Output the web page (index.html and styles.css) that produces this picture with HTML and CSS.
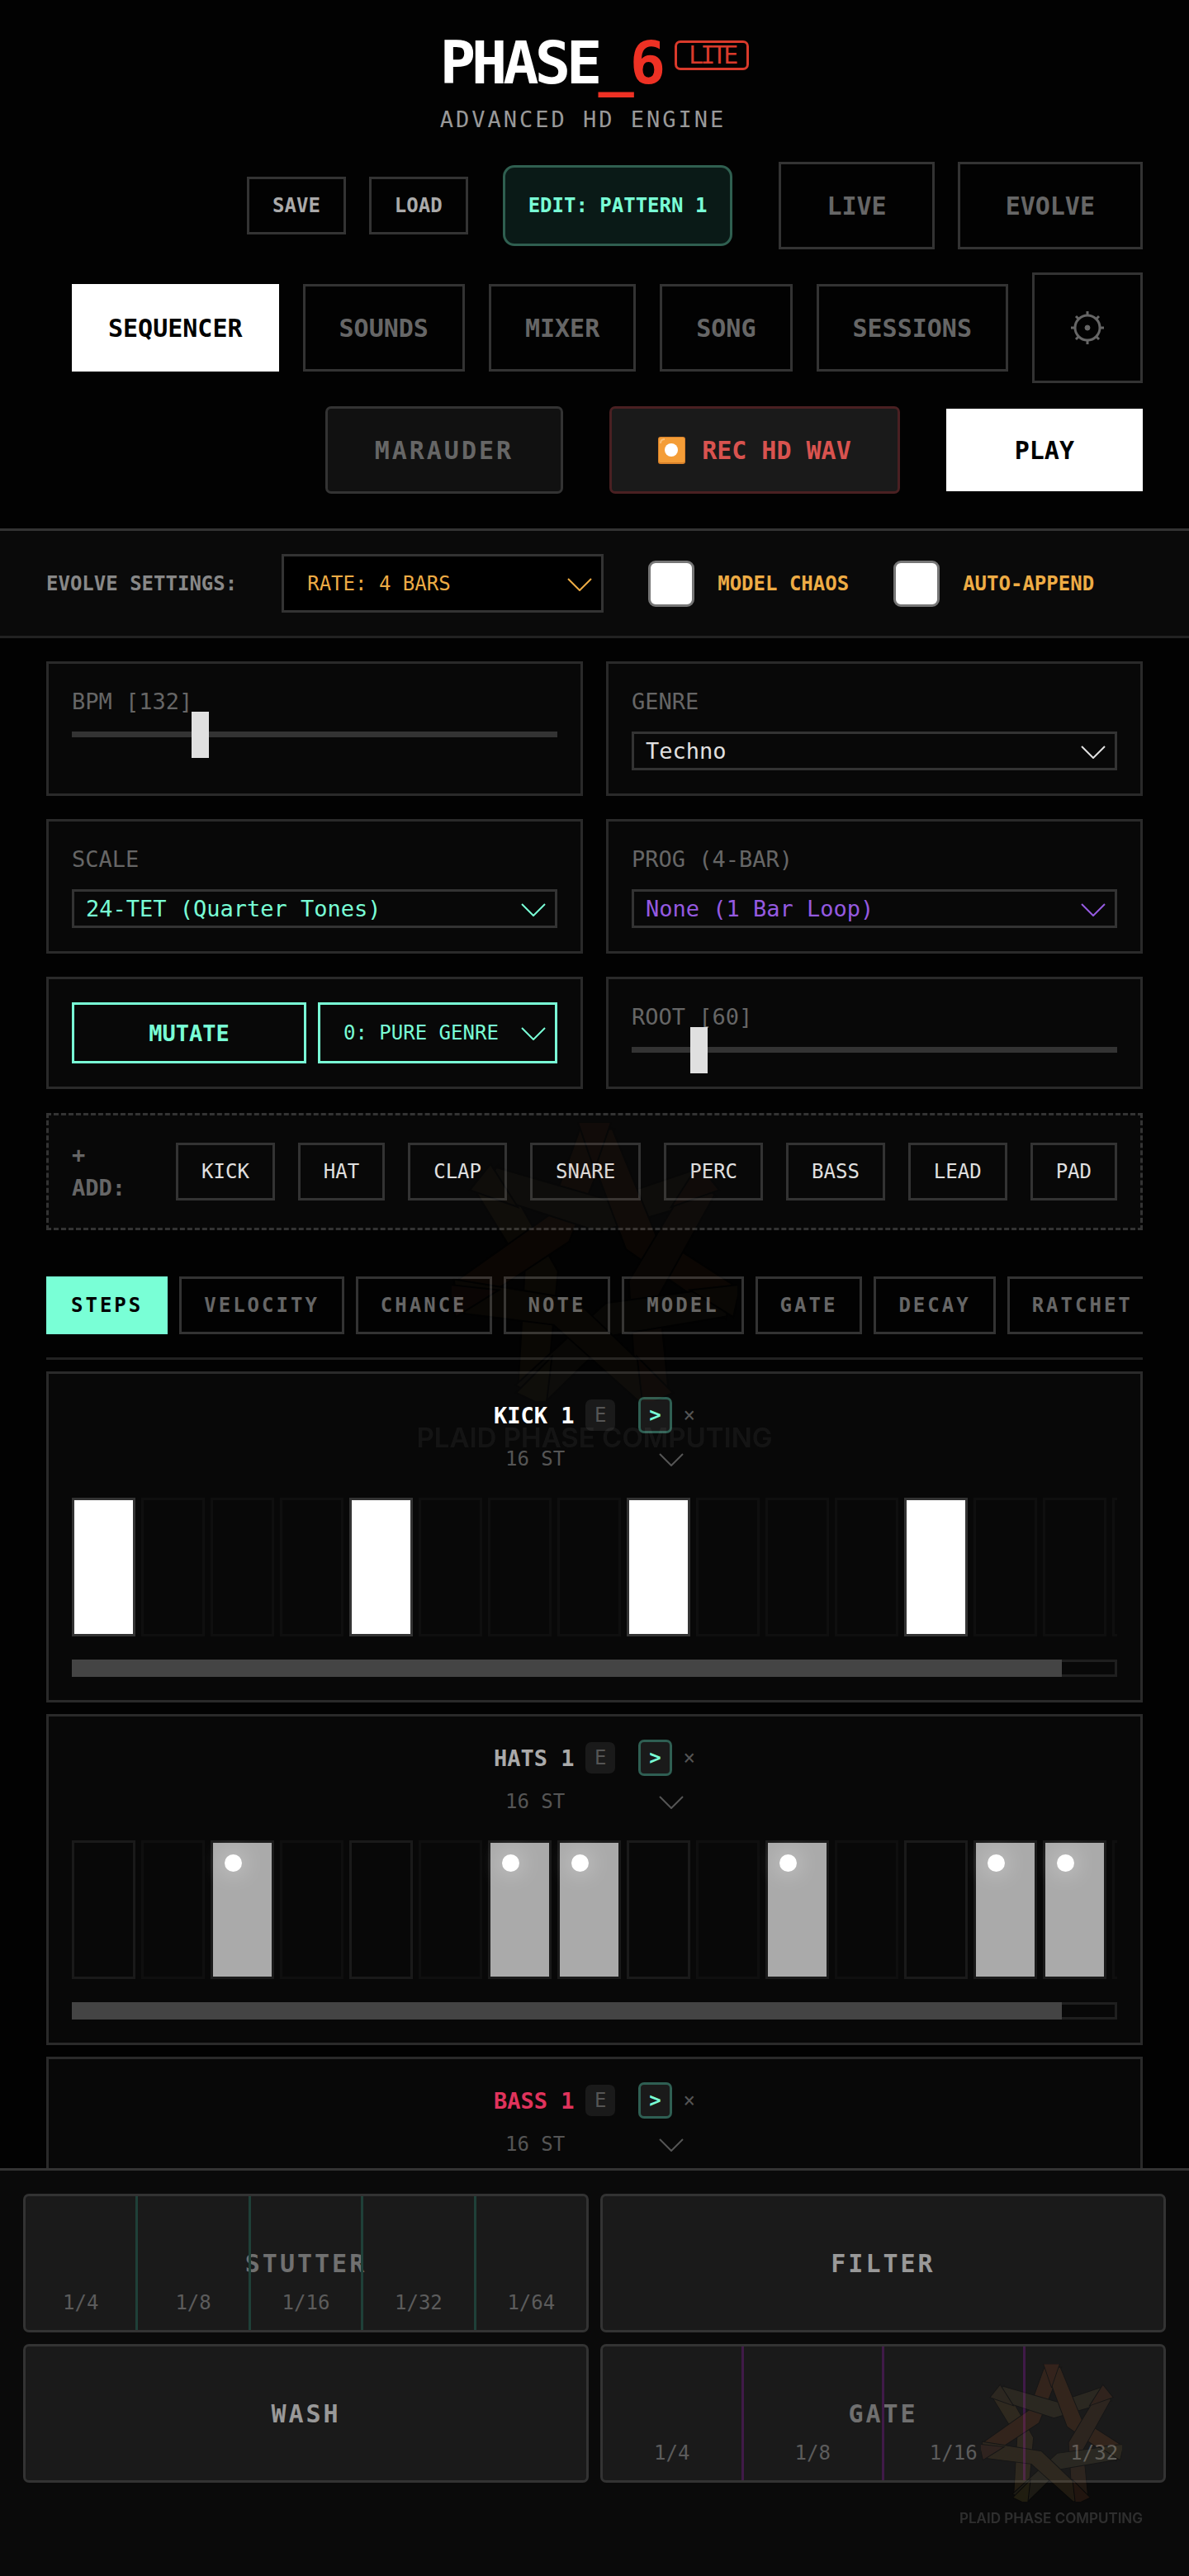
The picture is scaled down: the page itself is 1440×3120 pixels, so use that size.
FILE: index.html
```html
<!DOCTYPE html>
<html lang="en">
<head>
    <meta charset="UTF-8">
    <meta name="viewport" content="width=device-width, initial-scale=1.0">
    <title>PHASE_6 LITE</title>
    <link rel="stylesheet" href="styles.css">
</head>
<body>
    <!-- shared shapes -->
    <svg class="defs" width="0" height="0" aria-hidden="true">
        <symbol id="chevron" viewBox="0 0 30 16">
            <path d="M1 1 L15 15 L29 1" fill="none" stroke="currentColor" stroke-width="2"/>
        </symbol>
        <path id="ribbon" d="M14 41 L28 26 L64 90 L57 167 L40 159 L44 90 Z"/>
        <path id="fold" d="M76 0 L96 0 L86 29 Z"/>
        <symbol id="star" viewBox="0 0 172 168">
            <g stroke="#000" stroke-width="1">
                <use href="#ribbon" fill="#a8803c"/>
                <use href="#ribbon" fill="#c0622c" transform="rotate(51.43 86 88)"/>
                <use href="#ribbon" fill="#8a7a4a" transform="rotate(102.86 86 88)"/>
                <use href="#ribbon" fill="#c0682c" transform="rotate(154.29 86 88)"/>
                <use href="#ribbon" fill="#9c6440" transform="rotate(205.71 86 88)"/>
                <use href="#ribbon" fill="#867c50" transform="rotate(257.14 86 88)"/>
                <use href="#ribbon" fill="#a07a3c" transform="rotate(308.57 86 88)"/>
                <use href="#fold" fill="#c8582a"/>
                <use href="#fold" fill="#b05a34" transform="rotate(51.43 86 88)"/>
                <use href="#fold" fill="#947a3c" transform="rotate(102.86 86 88)"/>
                <use href="#fold" fill="#a85830" transform="rotate(154.29 86 88)"/>
                <use href="#fold" fill="#a08a38" transform="rotate(205.71 86 88)"/>
                <use href="#fold" fill="#a85a3c" transform="rotate(257.14 86 88)"/>
                <use href="#fold" fill="#947044" transform="rotate(308.57 86 88)"/>
            </g>
        </symbol>
    </svg>

    <header class="header">
        <div class="brand">
            <h1 class="logo">PHASE<span class="red">_6</span><span class="lite">LITE</span></h1>
            <p class="tagline">ADVANCED HD ENGINE</p>
        </div>
        <div class="row">
            <div class="group files">
                <button type="button" class="btn small">SAVE</button>
                <button type="button" class="btn small">LOAD</button>
            </div>
            <button type="button" class="btn pattern">EDIT: PATTERN 1</button>
            <div class="group modes">
                <button type="button" class="btn wide">LIVE</button>
                <button type="button" class="btn wide">EVOLVE</button>
            </div>
        </div>
        <nav class="row nav">
            <button type="button" class="btn active">SEQUENCER</button>
            <button type="button" class="btn">SOUNDS</button>
            <button type="button" class="btn">MIXER</button>
            <button type="button" class="btn">SONG</button>
            <button type="button" class="btn">SESSIONS</button>
            <button type="button" class="btn gear" aria-label="Settings">
                <svg width="40" height="40" viewBox="0 0 40 40" fill="none" stroke="currentColor" stroke-width="3">
                    <circle cx="20" cy="20" r="15"/>
                    <circle cx="20" cy="20" r="3" fill="currentColor" stroke-width="1"/>
                    <path d="M20 0V5M20 35V40M0 20H5M35 20H40M6 6L10 10M30 30L34 34M34 6L30 10M10 30L6 34"/>
                </svg>
            </button>
        </nav>
        <div class="row transport">
            <button type="button" class="btn marauder">MARAUDER</button>
            <button type="button" class="btn rec">
                <svg width="33" height="33" viewBox="0 0 33 33" aria-hidden="true">
                    <rect width="33" height="33" rx="3" fill="#d9822b"/>
                    <rect x="1" y="1" width="31" height="30" rx="2" fill="#f49d37"/>
                    <path d="M3 8Q3 3 8 3" fill="none" stroke="#fbc078" stroke-width="2"/>
                    <circle cx="16" cy="16" r="8" fill="#fff"/>
                </svg>
                REC HD WAV
            </button>
            <button type="button" class="btn play">PLAY</button>
        </div>
    </header>

    <section class="evolve">
        <span class="evolve-title">EVOLVE SETTINGS:</span>
        <div class="select rate">
            <select aria-label="Evolve rate"><option>RATE: 4 BARS</option></select>
            <svg class="chev"><use href="#chevron"/></svg>
        </div>
        <label class="check"><input type="checkbox"> MODEL CHAOS</label>
        <label class="check"><input type="checkbox"> AUTO-APPEND</label>
    </section>

    <main class="main">
        <div class="controls">
            <div class="panel">
                <label for="bpm">BPM [132]</label>
                <input type="range" id="bpm" min="40" max="400" value="132">
            </div>
            <div class="panel">
                <label for="genre">GENRE</label>
                <div class="select">
                    <select id="genre"><option>Techno</option></select>
                    <svg class="chev"><use href="#chevron"/></svg>
                </div>
            </div>
            <div class="panel">
                <label for="scale">SCALE</label>
                <div class="select mint">
                    <select id="scale"><option>24-TET (Quarter Tones)</option></select>
                    <svg class="chev"><use href="#chevron"/></svg>
                </div>
            </div>
            <div class="panel">
                <label for="prog">PROG (4-BAR)</label>
                <div class="select purple">
                    <select id="prog"><option>None (1 Bar Loop)</option></select>
                    <svg class="chev"><use href="#chevron"/></svg>
                </div>
            </div>
            <div class="panel mutate">
                <button type="button" class="mutate-btn">MUTATE</button>
                <div class="select mint mutate-select">
                    <select aria-label="Mutation mode"><option>0: PURE GENRE</option></select>
                    <svg class="chev"><use href="#chevron"/></svg>
                </div>
            </div>
            <div class="panel">
                <label for="root">ROOT [60]</label>
                <input type="range" id="root" min="40" max="200" value="60">
            </div>
        </div>

        <div class="add">
            <span class="add-title">+ ADD:</span>
            <button type="button" class="btn small light">KICK</button>
            <button type="button" class="btn small light">HAT</button>
            <button type="button" class="btn small light">CLAP</button>
            <button type="button" class="btn small light">SNARE</button>
            <button type="button" class="btn small light">PERC</button>
            <button type="button" class="btn small light">BASS</button>
            <button type="button" class="btn small light">LEAD</button>
            <button type="button" class="btn small light">PAD</button>
        </div>

        <div class="tabs">
            <button type="button" class="tab active">STEPS</button>
            <button type="button" class="tab">VELOCITY</button>
            <button type="button" class="tab">CHANCE</button>
            <button type="button" class="tab">NOTE</button>
            <button type="button" class="tab">MODEL</button>
            <button type="button" class="tab">GATE</button>
            <button type="button" class="tab">DECAY</button>
            <button type="button" class="tab">RATCHET</button>
        </div>

        <div id="tracks" class="tracks"></div>
    </main>

    <footer class="pads">
        <button type="button" class="pad stutter">
            <span class="pad-name">STUTTER</span>
            <span class="zones"><span>1/4</span><span>1/8</span><span>1/16</span><span>1/32</span><span>1/64</span></span>
        </button>
        <button type="button" class="pad"><span class="pad-name">FILTER</span></button>
        <button type="button" class="pad"><span class="pad-name">WASH</span></button>
        <button type="button" class="pad gate">
            <span class="pad-name">GATE</span>
            <span class="zones"><span>1/4</span><span>1/8</span><span>1/16</span><span>1/32</span></span>
        </button>
    </footer>

    <div class="watermark center">
        <svg viewBox="0 0 172 168"><use href="#star"/></svg>
        <span>PLAID PHASE COMPUTING</span>
    </div>
    <div class="watermark corner">
        <svg viewBox="0 0 172 168"><use href="#star"/></svg>
        <span>PLAID PHASE COMPUTING</span>
    </div>

    <script src="script.js"></script>
</body>
</html>
```
FILE: styles.css
```css
* {
    box-sizing: border-box;
}
body {
    margin: 0;
    height: 100vh;
    display: flex;
    flex-direction: column;
    overflow: hidden;
    background-color: #020202;
    color: #e0e0e0;
    font-family: "DejaVu Sans Mono", "Liberation Mono", monospace;
    font-size: 27px;
}
button, select {
    font-family: inherit;
    margin: 0;
    cursor: pointer;
}
.defs {
    position: absolute;
}

/* header */
.header {
    padding: 40px 56px 42px;
    border-bottom: 3px solid #333;
    display: flex;
    flex-direction: column;
    gap: 28px;
}
.brand {
    align-self: center;
    padding-bottom: 4px;
}
.logo {
    display: flex;
    align-items: flex-start;
    margin: 0 0 14px;
    font-size: 72px;
    line-height: 72px;
    letter-spacing: -5px;
    color: #fff;
}
.red {
    color: #ee3124;
}
.lite {
    margin: 9px 0 0 16px;
    padding: 0 14px;
    border: 3px solid #d93a2b;
    border-radius: 7px;
    color: #d93a2b;
    font-size: 30px;
    font-weight: normal;
    line-height: 30px;
    letter-spacing: -4px;
}
.tagline {
    margin: 0;
    line-height: 38px;
    letter-spacing: 3px;
    color: #999;
}
.row {
    display: flex;
    justify-content: flex-end;
    align-items: center;
    gap: 28px;
}
.nav {
    gap: 29px;
}
.group {
    display: flex;
    align-items: center;
    gap: 28px;
}
.files {
    margin-right: 14px;
}
.modes {
    margin-left: 28px;
}
.transport {
    gap: 56px;
}
.btn {
    height: 106px;
    padding: 0 41px;
    border: 3px solid #333;
    background: transparent;
    color: #666;
    font-size: 30px;
    font-weight: bold;
    white-space: nowrap;
}
.btn.active {
    background: #fff;
    border-color: #fff;
    color: #000;
}
.btn.small {
    height: 70px;
    padding: 0 28px;
    font-size: 24px;
    color: #aaa;
}
.btn.light {
    color: #e0e0e0;
    font-weight: normal;
}
.btn.wide {
    padding: 0 55px;
}
.btn.pattern {
    height: 98px;
    padding: 0 28px;
    border-color: #2f5f50;
    border-radius: 14px;
    background: #0a1a17;
    color: #79ffd6;
    font-size: 24px;
}
.btn.gear {
    width: 134px;
    height: 134px;
    padding: 0;
}
.btn.gear svg {
    display: block;
    margin: 0 auto;
}
.btn.marauder {
    padding: 0 57px;
    background: #111;
    border-radius: 7px;
    letter-spacing: 3px;
}
.btn.rec {
    display: flex;
    align-items: center;
    gap: 20px;
    padding: 0 56px;
    background: #1a1a1a;
    border-color: #4a2022;
    border-radius: 7px;
    color: #d9534f;
}
.btn.play {
    height: 100px;
    padding: 0 83px;
    border: 0;
    background: #fff;
    color: #000;
}

/* evolve bar */
.evolve {
    display: flex;
    align-items: center;
    gap: 54px;
    padding: 28px 56px;
    background: #0a0a0a;
    border-bottom: 3px solid #222;
    font-size: 24px;
    font-weight: bold;
}
.evolve-title {
    color: #888;
}
.check {
    display: flex;
    align-items: center;
    gap: 28px;
    color: #eeac45;
}
.check input {
    appearance: none;
    width: 56px;
    height: 56px;
    margin: 0;
    border: 3px solid #767676;
    border-radius: 9px;
    background: #fff;
}

/* drop-downs */
.select {
    position: relative;
    color: #e0e0e0;
}
.select select {
    appearance: none;
    display: block;
    width: 100%;
    height: 47px;
    padding: 0 14px;
    border: 3px solid #333;
    border-radius: 0;
    background: transparent;
    color: inherit;
    font-size: 27px;
}
.chev {
    position: absolute;
    right: 14px;
    top: calc(50% - 7px);
    width: 30px;
    height: 16px;
    pointer-events: none;
}
.mint {
    color: #79ffd6;
}
.purple {
    color: #955ae0;
}
.rate {
    width: 390px;
    color: #eeac45;
}
.rate select {
    height: 71px;
    padding: 0 28px;
    background: #000;
    font-size: 24px;
}

/* main */
.main {
    flex: 1;
    min-height: 0;
    overflow: hidden;
    padding: 28px 56px 0;
}
.controls {
    display: grid;
    grid-template-columns: 1fr 1fr;
    gap: 28px;
}
.panel {
    padding: 28px;
    border: 3px solid #2a2a2a;
    background: #080808;
}
.panel label {
    display: block;
    margin-bottom: 18px;
    line-height: 36px;
    color: #666;
}
input[type="range"] {
    appearance: none;
    display: block;
    width: 100%;
    height: 7px;
    margin: 0;
    background: #333;
}
input[type="range"]::-webkit-slider-thumb {
    appearance: none;
    width: 21px;
    height: 56px;
    background: #e0e0e0;
}
.mutate {
    display: flex;
    gap: 14px;
}
.mutate-btn {
    flex: 1;
    height: 74px;
    border: 3px solid #79ffd6;
    background: transparent;
    color: #79ffd6;
    font-size: 27px;
    font-weight: bold;
}
.mutate-select {
    width: 290px;
}
.mutate-select select {
    height: 74px;
    padding: 0 28px;
    border-color: #79ffd6;
    font-size: 24px;
}
.add {
    display: flex;
    align-items: center;
    gap: 28px;
    margin-top: 29px;
    padding: 28px;
    border: 3px dashed #333;
    background: #080808;
}
.add-title {
    flex: 1;
    margin-right: 28px;
    line-height: 40px;
    font-weight: bold;
    color: #666;
}

/* tabs */
.tabs {
    display: flex;
    gap: 14px;
    margin: 56px 0 14px;
    padding-bottom: 28px;
    border-bottom: 3px solid #222;
    overflow: hidden;
}
.tab {
    flex: none;
    height: 70px;
    padding: 0 27px;
    border: 3px solid #333;
    background: transparent;
    color: #666;
    font-size: 24px;
    font-weight: bold;
    letter-spacing: 3px;
}
.tab.active {
    background: #79ffd6;
    border-color: #79ffd6;
    color: #000;
}

/* tracks */
.tracks {
    display: flex;
    flex-direction: column;
    gap: 14px;
}
.track {
    padding: 28px;
    border: 3px solid #2a2a2a;
    background: #080808;
}
.track-head {
    width: 244px;
    margin: 0 auto 30px;
}
.track-title {
    display: flex;
    align-items: center;
    justify-content: space-between;
    height: 44px;
    margin-bottom: 14px;
}
.track-name {
    font-weight: bold;
    white-space: nowrap;
}
.track button {
    padding: 0;
    border: 0;
    background: transparent;
    color: #555;
    font-size: 24px;
}
.track .euclid {
    width: 36px;
    height: 38px;
    border-radius: 7px;
    background: #1a1a1a;
}
.track .dir {
    width: 41px;
    height: 44px;
    margin-left: 14px;
    border: 3px solid #2f5f53;
    border-radius: 7px;
    background: #1a1a1a;
    color: #79ffd6;
    font-weight: bold;
}
.track .select {
    color: #555;
}
.track select {
    height: 34px;
    border: 0;
    font-size: 24px;
}
.white {
    color: #fff;
}
.grey {
    color: #aaa;
}
.pink {
    color: #e0335c;
}
.steps {
    display: flex;
    gap: 7px;
    overflow: hidden;
}
.track .step {
    position: relative;
    flex: none;
    width: 77px;
    height: 168px;
    border: 3px solid #0f0f0f;
}
.track .step.beat {
    border-color: #1a1a1a;
}
.track .white ~ .step.beat {
    border-color: #0f0f0f;
}
.track .step.on {
    border-color: #1a1a1a;
    background: currentColor;
}
.track .steps .step.on.white {
    border-color: #333;
    color: #fff;
}
.track .on.grey {
    color: #aaa;
}
.track .on.pink {
    color: #e0335c;
}
.dot {
    position: absolute;
    top: 14px;
    left: 14px;
    width: 21px;
    height: 21px;
    border-radius: 50%;
    background: #fff;
    box-shadow: 0 0 28px rgba(255, 255, 255, 0.6);
}
.scroll {
    height: 21px;
    margin-top: 28px;
    background: #080808;
    box-shadow: inset 0 0 0 3px #1f1f1f;
}
.scroll-thumb {
    height: 21px;
    background: #444;
}

/* performance pads */
.pads {
    display: grid;
    grid-template-columns: 1fr 1fr;
    gap: 14px;
    padding: 28px 28px 113px;
    border-top: 3px solid #333;
    background: #0a0a0a;
}
.pad {
    position: relative;
    height: 168px;
    padding: 0;
    border: 3px solid #333;
    border-radius: 7px;
    background: #1a1a1a;
    color: #999;
}
.pad-name {
    font-size: 30px;
    font-weight: bold;
    letter-spacing: 3px;
}
.stutter, .gate {
    color: #707070;
}
.zones {
    position: absolute;
    inset: 0;
    display: flex;
}
.zones span {
    flex: 1;
    display: flex;
    align-items: flex-end;
    justify-content: center;
    padding-bottom: 19px;
    border-right: 3px solid #1f4038;
    color: #5c5c5c;
    font-size: 24px;
}
.gate .zones span {
    border-color: #401a48;
}
.zones span:last-child {
    border-right: 0;
}

/* watermarks */
.watermark {
    position: fixed;
    display: flex;
    flex-direction: column;
    align-items: center;
    pointer-events: none;
    color: #fff;
    font-family: Inter, "Open Sans", sans-serif;
    font-weight: 600;
    white-space: nowrap;
}
.center {
    inset: 0;
    justify-content: center;
    gap: 24px;
    opacity: 0.05;
    font-size: 33px;
}
.center svg {
    width: 346px;
}
.corner {
    right: 56px;
    bottom: 60px;
    gap: 10px;
    opacity: 0.15;
    font-size: 17px;
}
.corner svg {
    width: 171px;
}
```
FILE: script.js
```js
const tracks = [
    { name: 'KICK 1', color: 'white', on: [0, 4, 8, 12] },
    { name: 'HATS 1', color: 'grey', on: [2, 6, 7, 10, 13, 14], dots: true },
    { name: 'BASS 1', color: 'pink', on: [0, 3, 6, 10] }
];
const STEPS = 16;
const STEP_WIDTH = 84;

function buildSteps(track) {
    let html = '';
    for (let i = 0; i < STEPS; i++) {
        const on = track.on.includes(i);
        let cls = 'step';
        if (i % 4 === 0) cls += ' beat';
        if (on) cls += ' on ' + track.color;
        html += `<button type="button" class="${cls}" aria-label="${track.name} step ${i + 1}">`;
        if (on && track.dots) html += '<span class="dot"></span>';
        html += '</button>';
    }
    return html;
}

document.getElementById('tracks').innerHTML = tracks.map(track => `
    <section class="track">
        <div class="track-head">
            <div class="track-title">
                <span class="track-name ${track.color}">${track.name}</span>
                <button type="button" class="euclid">E</button>
                <button type="button" class="dir">&gt;</button>
                <button type="button" class="remove">&times;</button>
            </div>
            <div class="select">
                <select aria-label="${track.name} length"><option>16 ST</option></select>
                <svg class="chev"><use href="#chevron"/></svg>
            </div>
        </div>
        <div class="steps">${buildSteps(track)}</div>
        <div class="scroll"><div class="scroll-thumb"></div></div>
    </section>`).join('');

// thumb shows how much of the step row is in view
document.querySelectorAll('.track').forEach(el => {
    const view = el.querySelector('.steps').clientWidth;
    const total = STEPS * STEP_WIDTH - 7;
    el.querySelector('.scroll-thumb').style.width = Math.min(100, view / total * 100) + '%';
});
```
